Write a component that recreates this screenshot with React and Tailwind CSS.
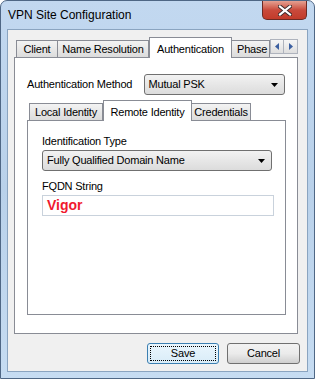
export default function App() {
  const font = { fontFamily: '"Liberation Sans", Arial, sans-serif' };
  return (
    <div className="w-[315px] h-[379px] bg-white" style={font}>
      <div className="w-[315px] h-[379px] rounded-t-[7px] border border-[#4f6785] bg-gradient-to-b from-[#c2d8f0] via-[#b9d1ea] to-[#c6dcf2] flex flex-col">
        {/* title bar */}
        <div className="h-[28px] flex items-start justify-between">
          <div className="pl-[7px] pt-[6px] text-[12px] text-black leading-[16px]">VPN Site Configuration</div>
          <div className="mr-[7px] w-[45px] h-[19px] rounded-b-[5px] border border-t-0 border-[#6b2a24] bg-gradient-to-b from-[#e4a092] via-[#c94a3c] to-[#c23b2a] flex items-center justify-center">
            <svg width="14" height="11" viewBox="0 0 14 11">
              <path d="M2 1.5 L12 9.5 M12 1.5 L2 9.5" stroke="#3a2a2a" strokeWidth="4" strokeLinecap="square" />
              <path d="M2 1.5 L12 9.5 M12 1.5 L2 9.5" stroke="#ffffff" strokeWidth="2.2" strokeLinecap="square" />
            </svg>
          </div>
        </div>
        {/* client area */}
        <div className="mx-[6px] h-[343px] border border-[#8aa4c0] bg-[#f0f0f0] flex flex-col text-[11px] tracking-[-0.2px] text-black">
          <div className="pl-[6px] pr-[9px] pt-[6px]">
            {/* tab strip */}
            <div className="h-[21px] flex items-end pl-[2px] relative">
              <div className="w-[42px] h-[17px] border border-b-0 border-[#898c95] bg-gradient-to-b from-[#f3f3f3] to-[#dcdcdc] flex items-center justify-center">Client</div>
              <div className="w-[91px] h-[17px] border border-b-0 border-l-0 border-[#898c95] bg-gradient-to-b from-[#f3f3f3] to-[#dcdcdc] flex items-center justify-center">Name Resolution</div>
              <div className="w-[83px] h-[21px] -mb-px border border-b-0 border-[#898c95] bg-white flex justify-center items-start pt-[3px] relative z-10">Authentication</div>
              <div className="h-[17px] pl-[5px] w-[38px] overflow-hidden border border-b-0 border-l-0 border-[#898c95] bg-gradient-to-b from-[#f3f3f3] to-[#dcdcdc] flex items-center">Phase</div>
              <div className="absolute right-0 top-[3px] flex">
                <div className="w-[14px] h-[15px] border border-[#aeb3bd] bg-gradient-to-b from-[#f6f6f6] to-[#dedede] flex items-center justify-center">
                  <svg width="4" height="7" viewBox="0 0 4 7"><path d="M4 0 L0 3.5 L4 7 Z" fill="#3b5fa0" /></svg>
                </div>
                <div className="w-[14px] h-[15px] border border-l-0 border-[#aeb3bd] bg-gradient-to-b from-[#f6f6f6] to-[#dedede] flex items-center justify-center">
                  <svg width="4" height="7" viewBox="0 0 4 7"><path d="M0 0 L4 3.5 L0 7 Z" fill="#3b5fa0" /></svg>
                </div>
              </div>
            </div>
            {/* main panel */}
            <div className="h-[277px] border border-[#898c95] bg-white px-[12px] pt-[16px]">
              <div className="flex items-center">
                <div className="w-[118px]">Authentication Method</div>
                <div className="w-[143px] h-[21px] rounded-[3px] border border-[#707070] bg-gradient-to-b from-[#f2f2f2] to-[#dcdcdc] flex items-center justify-between pl-[4px] pr-[6px]">
                  <span>Mutual PSK</span>
                  <svg width="7" height="4" viewBox="0 0 7 4"><path d="M0 0 L7 0 L3.5 4 Z" fill="#000" /></svg>
                </div>
              </div>
              {/* inner tabs */}
              <div className="mt-[4px] h-[21px] flex items-end pl-[2px]">
                <div className="w-[74px] h-[17px] border border-b-0 border-[#898c95] bg-gradient-to-b from-[#f3f3f3] to-[#dcdcdc] flex items-center justify-center">Local Identity</div>
                <div className="w-[89px] h-[21px] -mb-px border border-b-0 border-[#898c95] bg-white flex justify-center items-start pt-[3px] relative z-10">Remote Identity</div>
                <div className="w-[59px] h-[17px] border border-b-0 border-l-0 border-[#898c95] bg-gradient-to-b from-[#f3f3f3] to-[#dcdcdc] flex items-center justify-center">Credentials</div>
              </div>
              <div className="w-[259px] h-[195px] border border-[#898c95] bg-white pl-[14px] pt-[12px]">
                <div className="leading-[16px]">Identification Type</div>
                <div className="mt-[1px] w-[230px] h-[21px] rounded-[3px] border border-[#707070] bg-gradient-to-b from-[#f2f2f2] to-[#dcdcdc] flex items-center justify-between pl-[4px] pr-[6px]">
                  <span>Fully Qualified Domain Name</span>
                  <svg width="7" height="4" viewBox="0 0 7 4"><path d="M0 0 L7 0 L3.5 4 Z" fill="#000" /></svg>
                </div>
                <div className="mt-[7px] leading-[16px]">FQDN String</div>
                <div className="mt-[1px] w-[232px] h-[21px] border border-[#c9d2dc] bg-white flex items-center pl-[4px]">
                  <span className="text-[14px] tracking-normal font-bold text-[#f0192f]">Vigor</span>
                </div>
              </div>
            </div>
          </div>
          {/* buttons */}
          <div className="mt-[9px] pr-[7px] flex justify-end gap-[8px]">
            <div className="w-[72px] h-[21px] rounded-[3px] border border-[#3c7fb1] bg-gradient-to-b from-[#eaf6fd] to-[#d9ecf8] p-[2px]">
              <div className="w-full h-full border border-dotted border-black flex items-center justify-center">Save</div>
            </div>
            <div className="w-[73px] h-[21px] rounded-[3px] border border-[#707070] bg-gradient-to-b from-[#f2f2f2] via-[#ebebeb] to-[#cfcfcf] flex items-center justify-center">Cancel</div>
          </div>
        </div>
      </div>
    </div>
  );
}
